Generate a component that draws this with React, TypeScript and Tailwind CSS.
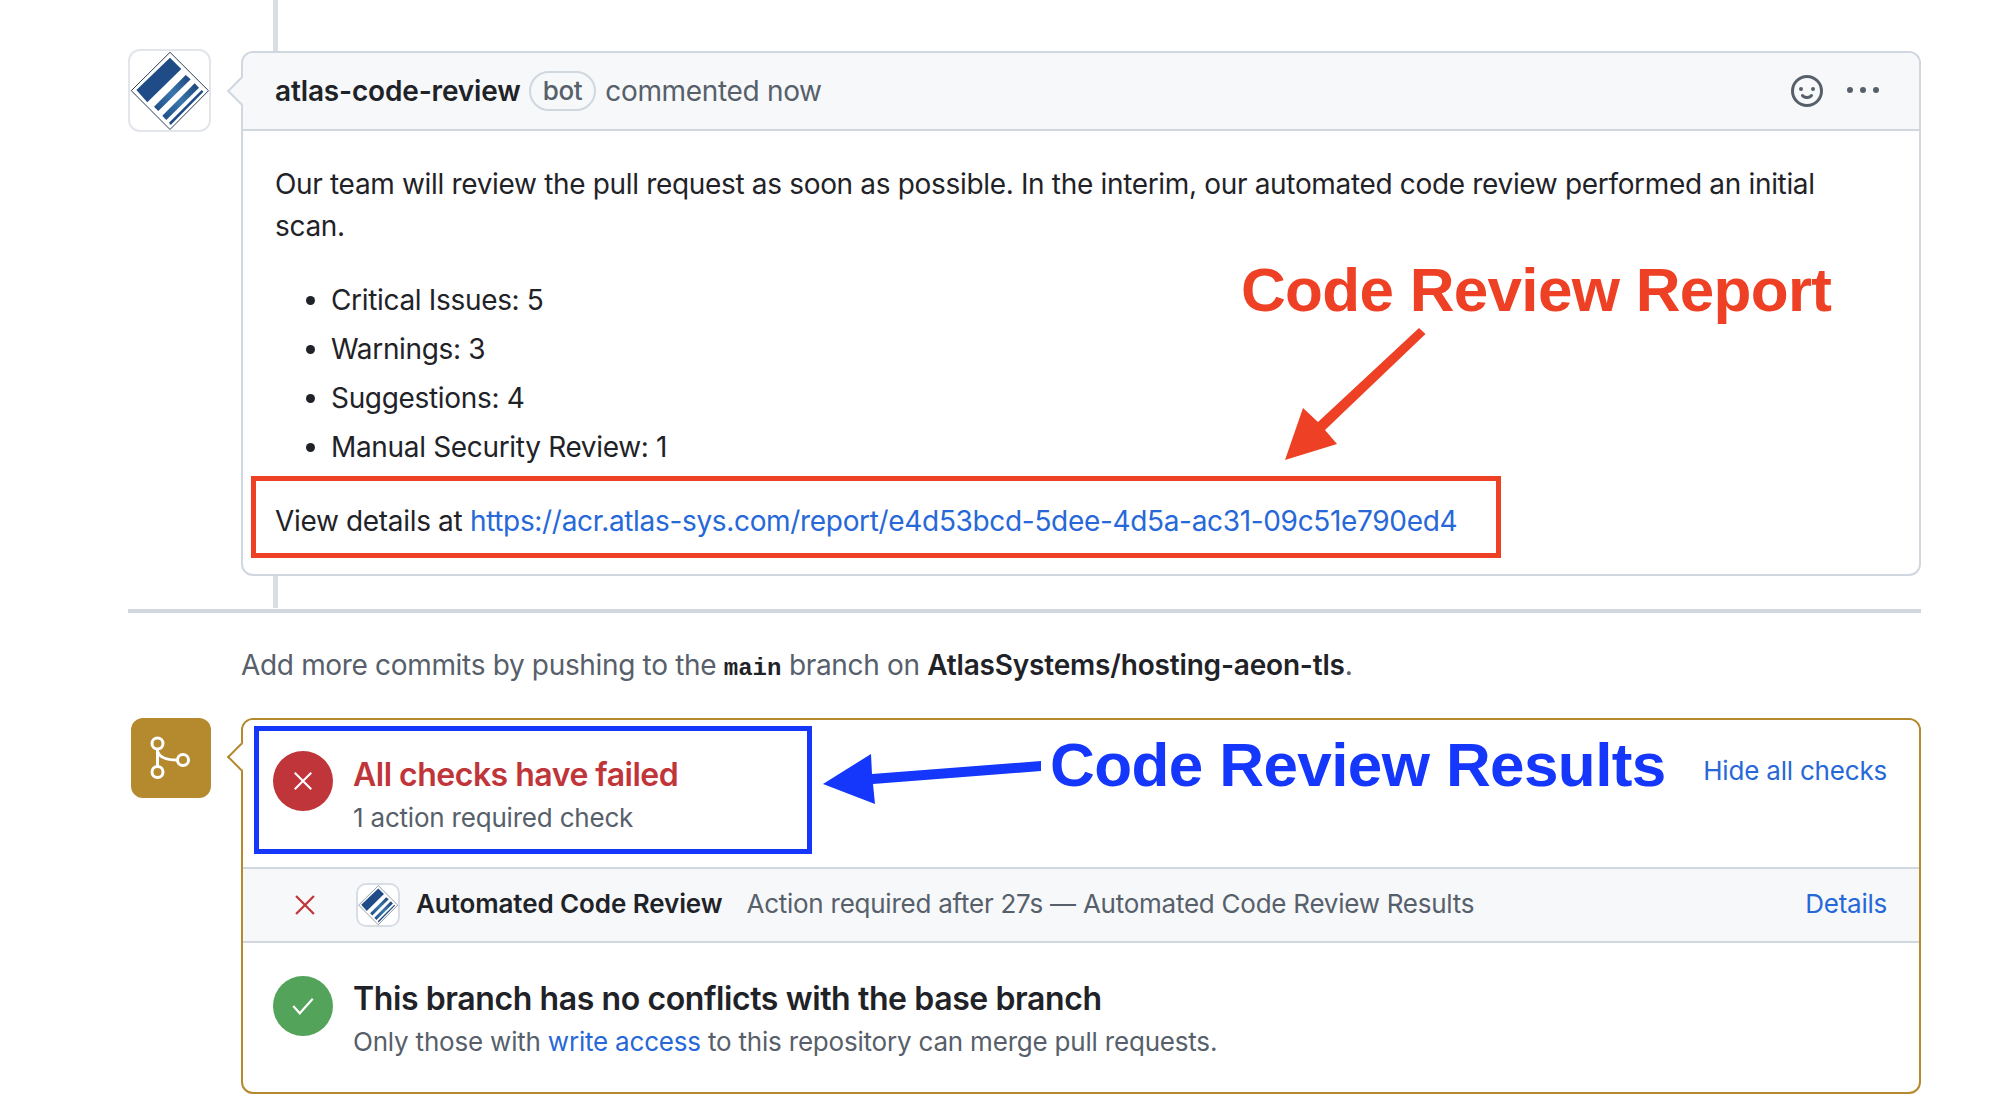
const OCT_SMILEY =
  "M8 0a8 8 0 1 1 0 16A8 8 0 0 1 8 0ZM1.5 8a6.5 6.5 0 1 0 13 0 6.5 6.5 0 0 0-13 0Zm3.82 1.636a.75.75 0 0 1 1.038.175l.007.009c.103.118.22.222.35.31.264.178.683.37 1.285.37.602 0 1.02-.192 1.285-.371.13-.088.247-.192.35-.31l.007-.008a.75.75 0 0 1 1.222.87l-.022-.015c.02.013.021.015.021.015v.001l-.001.002-.002.003-.005.007-.014.019a2.066 2.066 0 0 1-.184.213c-.16.166-.338.316-.53.445-.63.418-1.37.638-2.127.629-.946 0-1.652-.308-2.126-.63a3.331 3.331 0 0 1-.715-.657l-.014-.02-.005-.006-.002-.003v-.002h-.001l.613-.432-.614.43a.75.75 0 0 1 .183-1.044ZM12 7a1 1 0 1 1-2 0 1 1 0 0 1 2 0ZM5 8a1 1 0 1 1 0-2 1 1 0 0 1 0 2Zm5.25 2.25.592.416a97.71 97.71 0 0 0-.592-.416Z";
const OCT_KEBAB =
  "M8 9a1.5 1.5 0 1 0 0-3 1.5 1.5 0 0 0 0 3ZM1.5 9a1.5 1.5 0 1 0 0-3 1.5 1.5 0 0 0 0 3Zm13 0a1.5 1.5 0 1 0 0-3 1.5 1.5 0 0 0 0 3Z";

function Octicon({ d, className }: { d: string; className: string }) {
  return (
    <svg viewBox="0 0 16 16" fill="currentColor" className={className}>
      <path d={d} />
    </svg>
  );
}

function ThinX({ className }: { className: string }) {
  return (
    <svg viewBox="0 0 16 16" fill="none" stroke="currentColor" strokeWidth="1.4" className={className}>
      <path d="M2.5 2.5 L13.5 13.5 M13.5 2.5 L2.5 13.5" />
    </svg>
  );
}

function ThinCheck({ className }: { className: string }) {
  return (
    <svg viewBox="0 0 32 32" fill="none" stroke="currentColor" strokeWidth="2.6" className={className}>
      <path d="M4 16 L12 25 L28 7" />
    </svg>
  );
}

// git merge glyph, thinner than the octicon
function MergeGlyph({ className }: { className: string }) {
  return (
    <svg viewBox="0 0 80 80" fill="none" stroke="currentColor" strokeWidth="3" className={className}>
      <circle cx="26.5" cy="25.5" r="5.5" />
      <circle cx="26.5" cy="54" r="5.5" />
      <circle cx="52" cy="42" r="5.5" />
      <path d="M26.5 31 V48.5 M26.5 33 C28 39 34 42 46.5 42" />
    </svg>
  );
}

// diamond logo used for the bot avatar
function AtlasLogo({ className }: { className: string }) {
  return (
    <svg viewBox="2 2 79 79" className={className}>
      <defs>
        <linearGradient id="atlas" x1="0" y1="1" x2="1" y2="0">
          <stop offset="0" stopColor="#1d4b85" />
          <stop offset="0.5" stopColor="#3a77ad" />
          <stop offset="1" stopColor="#1c4478" />
        </linearGradient>
      </defs>
      <path d="M42 3.3 L80.5 41.7 L42 80.5 L3.3 41.7 Z" fill="#fff" stroke="#2b3d55" strokeWidth="1" />
      <path d="M42 8.7 L53.3 20 L19.3 53.3 L8.4 41 Z" fill="#1f4c86" />
      <path d="M57.7 26 L62.7 30.3 L30.3 62 L26 57.7 Z" fill="url(#atlas)" />
      <path d="M66.7 34.3 L71 38.7 L38.3 71 L34.3 66.7 Z" fill="url(#atlas)" />
      <path d="M73.7 41 L75.4 42.7 L42.7 76 L41 73.7 Z" fill="#1f4c86" />
    </svg>
  );
}

export default function App() {
  return (
    <div className="relative w-[1994px] h-[1115px] overflow-hidden bg-white text-[28px] leading-[42px] tracking-[-0.33px] text-[#1f2328] font-['Inter','Liberation_Sans',sans-serif]">
      {/* timeline line behind the first comment */}
      <div className="absolute left-[273px] top-0 h-[608px] w-[5px] bg-[#d8dee4]" />

      <div className="relative pl-[128px] pr-[73px]">
        {/* bot comment */}
        <div className="flex items-start gap-[30px] pt-[49px]">
          <div className="w-[83px] h-[83px] shrink-0 rounded-[12px] border-2 border-[#e2e5e9] bg-white">
            <AtlasLogo className="w-full h-full" />
          </div>
          <div className="relative mt-[2px] flex-1 rounded-[12px] border-2 border-[#d0d7de] bg-white">
            <div className="absolute -left-[12px] top-[28px] w-[20px] h-[20px] rotate-45 border-b-2 border-l-2 border-[#d0d7de] bg-[#f6f8fa]" />
            <div className="relative flex h-[78px] items-center justify-between rounded-t-[10px] border-b-2 border-[#d0d7de] bg-[#f6f8fa] px-[32px]">
              <div className="flex items-center">
                <span className="font-semibold tracking-[-0.15px]">atlas-code-review</span>
                <span className="ml-[8px] rounded-full border-2 border-[#d0d7de] px-[12px] text-[26px] leading-[36px] font-medium text-[#57606a]">bot</span>
                <span className="ml-[9px] text-[#57606a]">commented now</span>
              </div>
              <div className="flex items-center gap-[24px] pr-[8px] text-[#57606a]">
                <Octicon d={OCT_SMILEY} className="w-[32px] h-[32px]" />
                <Octicon d={OCT_KEBAB} className="w-[32px] h-[32px]" />
              </div>
            </div>
            <div className="px-[32px] py-[32px]">
              <p>
                Our team will review the pull request as soon as possible. In the interim, our automated code review performed an initial scan.
              </p>
              <ul className="mt-[32px] list-disc pl-[56px]">
                <li>Critical Issues: 5</li>
                <li className="mt-[7px]">Warnings: 3</li>
                <li className="mt-[7px]">Suggestions: 4</li>
                <li className="mt-[7px]">Manual Security Review: 1</li>
              </ul>
              <p className="mt-[32px]">
                View details at{" "}
                <span className="text-[#2768d8]">https://acr.atlas-sys.com/report/e4d53bcd-5dee-4d5a-ac31-09c51e790ed4</span>
              </p>
            </div>
          </div>
        </div>

        <div className="mt-[33px] h-[4px] bg-[#d0d7de]" />

        <p className="mt-[31px] ml-[113px] text-[#57606a]">
          Add more commits by pushing to the{" "}
          <span className="font-['Liberation_Mono',monospace] text-[24px] font-bold tracking-normal text-[#1f2328]">main</span> branch on{" "}
          <span className="font-semibold tracking-[-0.18px] text-[#1f2328]">AtlasSystems/hosting-aeon-tls</span>.
        </p>

        {/* merge box */}
        <div className="mt-[28px] flex items-start gap-[30px]">
          <div className="ml-[3px] h-[80px] w-[80px] shrink-0 rounded-[12px] bg-[#b5892e] text-white">
            <MergeGlyph className="w-full h-full" />
          </div>
          <div className="relative flex-1 rounded-[12px] border-2 border-[#b5892e] bg-white">
            <div className="absolute -left-[12px] top-[27px] w-[20px] h-[20px] rotate-45 border-b-2 border-l-2 border-[#b5892e] bg-white" />
            <div className="relative flex h-[147px] items-start justify-between rounded-t-[10px] bg-white pl-[30px] pr-[32px] pt-[31px]">
              <div className="flex gap-[20px]">
                <div className="flex h-[60px] w-[60px] items-center justify-center rounded-full bg-[#bf3539] text-white">
                  <ThinX className="w-[24px] h-[24px]" />
                </div>
                <div className="pt-[2px] text-[26px] tracking-[-0.2px] text-[#57606a]">
                  <div className="text-[32px] leading-[44px] font-semibold tracking-[-0.5px] text-[#bf3539]">All checks have failed</div>
                  <div>1 action required check</div>
                </div>
              </div>
              <span className="-mt-[1px] text-[26px] tracking-[-0.2px] text-[#2768d8]">Hide all checks</span>
            </div>
            <div className="flex h-[76px] items-center border-y-2 border-[#d0d7de] bg-[#f6f8fa] pl-[49px] pr-[32px] text-[26px] tracking-[-0.25px]">
              <ThinX className="w-[26px] h-[26px] text-[#bf3539]" />
              <div className="ml-[38px] h-[44px] w-[44px] rounded-[10px] border-2 border-[#d8dee4] bg-white">
                <AtlasLogo className="w-full h-full" />
              </div>
              <span className="ml-[16px] -mt-[2px] font-semibold tracking-[-0.1px]">Automated Code Review</span>
              <span className="ml-[24px] -mt-[2px] flex-1 text-[#57606a]">Action required after 27s — Automated Code Review Results</span>
              <span className="-mt-[2px] text-[#2768d8]">Details</span>
            </div>
            <div className="flex gap-[20px] pl-[30px] pt-[33px] pb-[29px]">
              <div className="flex h-[60px] w-[60px] items-center justify-center rounded-full bg-[#53a35a] text-white">
                <ThinCheck className="w-[26px] h-[26px]" />
              </div>
              <div className="pt-[1px] text-[26px] tracking-[-0.2px] text-[#57606a]">
                <div className="text-[32px] leading-[44px] font-semibold tracking-[-0.4px] text-[#1f2328]">This branch has no conflicts with the base branch</div>
                <div>
                  Only those with <span className="text-[#2768d8]">write access</span> to this repository can merge pull requests.
                </div>
              </div>
            </div>
          </div>
        </div>
      </div>

      {/* annotations drawn on top of the screenshot */}
      <div className="absolute left-[251px] top-[476px] h-[82px] w-[1250px] border-[5px] border-[#ee4025]" />
      <div className="absolute left-[254px] top-[726px] h-[128px] w-[558px] border-[5px] border-[#1437fb]" />
      <div className="absolute left-[1241px] top-[250px] font-['Liberation_Sans',sans-serif] text-[62px] leading-[80px] font-bold tracking-[-0.7px] text-[#ee4025] whitespace-nowrap">Code Review Report</div>
      <div className="absolute left-[1050px] top-[725px] font-['Liberation_Sans',sans-serif] text-[62px] leading-[80px] font-bold tracking-[-0.6px] text-[#1437fb] whitespace-nowrap">Code Review Results</div>
      <svg viewBox="0 0 1994 1115" className="absolute left-0 top-0 w-[1994px] h-[1115px] pointer-events-none">
        <path d="M1419 328 L1425.5 334 L1325 430 L1337 444 L1285 460 L1303 408 L1318 422 Z" fill="#ee4025" />
        <path d="M1041 761 L1041 771 L873 784 L875 804 L823 784 L871 754 L872 774 Z" fill="#1437fb" />
      </svg>
    </div>
  );
}
